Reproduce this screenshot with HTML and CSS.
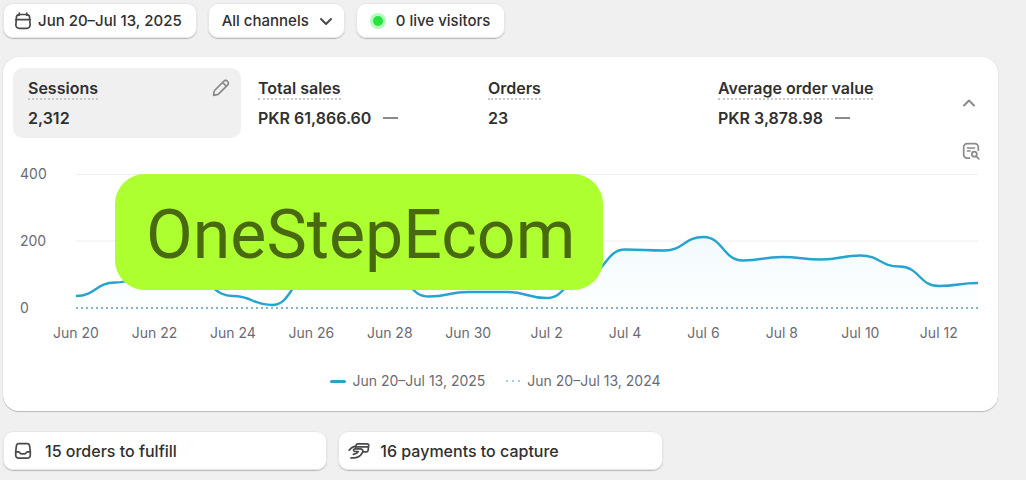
FILE: index.html
```html
<!DOCTYPE html>
<html lang="en">
<head>
<meta charset="utf-8">
<meta name="viewport" content="width=device-width, initial-scale=1">
<title>Store overview</title>
<link rel="stylesheet" href="styles.css">
</head>
<body>
<main class="page">
  <div class="filters">
    <button class="pill" type="button">
      <svg class="icon" viewBox="0 0 18 18" aria-hidden="true"><path d="M5.2 1.2v2M12.8 1.2v2M1.7 7.6h14.6M5 2.5h8a3 3 0 0 1 2.6 3.2l.5 7a3.2 3.2 0 0 1-3.2 3.6H5.1a3.2 3.2 0 0 1-3.2-3.6l.5-7A3 3 0 0 1 5 2.500z"/></svg>
      Jun 20–Jul 13, 2025
    </button>
    <button class="pill pill-menu" type="button">
      All channels
      <svg class="chevron" viewBox="0 0 14 14" aria-hidden="true"><path d="M2 5l5 5 5-5"/></svg>
    </button>
    <button class="pill pill-live" type="button"><span class="live-dot"></span>0 live visitors</button>
  </div>

  <section class="card">
    <div class="summary">
      <div class="metrics">
        <div class="metric metric-active">
          <span class="metric-name">Sessions</span>
          <span class="metric-value">2,312</span>
          <button class="edit" type="button" aria-label="Edit metric">
            <svg class="icon icon-muted" viewBox="0 0 18 18" aria-hidden="true"><path d="M1.600 16.400l.5-3.700a3 3 0 0 1 .9-1.700l8.700-8.700a2.500 2.500 0 0 1 3.800 0 2.500 2.500 0 0 1 0 3.800L7 14.700a3 3 0 0 1-1.700.9zM10.600 3.500l3.700 3.700"/></svg>
          </button>
        </div>
        <div class="metric">
          <span class="metric-name">Total sales</span>
          <span class="metric-value">PKR 61,866.60<i class="no-change"></i></span>
        </div>
        <div class="metric">
          <span class="metric-name">Orders</span>
          <span class="metric-value">23</span>
        </div>
        <div class="metric">
          <span class="metric-name">Average order value</span>
          <span class="metric-value">PKR 3,878.98<i class="no-change"></i></span>
        </div>
      </div>
      <button class="collapse" type="button" aria-label="Collapse">
        <svg class="chevron icon-muted" viewBox="0 0 14 14" aria-hidden="true"><path d="M2 9.500l5-5 5 5"/></svg>
      </button>
    </div>

    <div class="toolbar">
      <button class="explore" type="button" aria-label="Explore report">
        <svg class="icon icon-muted" viewBox="0 0 18 18" aria-hidden="true"><path d="M7.500 16.200H5.200a3.500 3.500 0 0 1-3.500-3.500V5.200a3.500 3.500 0 0 1 3.500-3.500h7.600a3.500 3.500 0 0 1 3.500 3.500v3M5.500 6h7M5.500 9h2.500M14.300 14.300l2.500 2.500"/><circle cx="12.300" cy="12.200" r="2.500"/></svg>
      </button>
    </div>

    <div class="chart">
      <div class="y-axis"><span>400</span><span>200</span><span>0</span></div>
      <svg class="plot" viewBox="0 0 920 134" preserveAspectRatio="none" role="img" aria-label="Sessions by day">
        <defs><linearGradient id="fill" x1="0" y1="0" x2="0" y2="1"><stop offset="0" stop-color="#f2fafd"/><stop offset="1" stop-color="#fdffff"/></linearGradient></defs>
        <path class="grid-line" d="M0 .5H920M0 67H920"/>
        <path fill="url(#fill)" d="M0 122C20 122 20 108.500 40 108.500S60 100 80 100 100 106 120 106 140 122 160 122 180 131 200 131 220 101 240 101 260 90 280 90 300 101 320 101 340 122.500 360 122.500 380 118 400 118 420 118 440 118 460 124 480 124 500 101 520 101 540 75.500 560 75.500 580 76.500 600 76.500 620 63 640 63 660 86.500 680 86.500 700 83 720 83 740 85.500 760 85.500 780 81.500 800 81.500 820 92.500 840 92.500 860 112 880 112 900 109 920 109V134H0z"/>
        <path class="previous" d="M0 134H920"/>
        <path class="current" d="M0 122C20 122 20 108.500 40 108.500S60 100 80 100 100 106 120 106 140 122 160 122 180 131 200 131 220 101 240 101 260 90 280 90 300 101 320 101 340 122.500 360 122.500 380 118 400 118 420 118 440 118 460 124 480 124 500 101 520 101 540 75.500 560 75.500 580 76.500 600 76.500 620 63 640 63 660 86.500 680 86.500 700 83 720 83 740 85.500 760 85.500 780 81.500 800 81.500 820 92.500 840 92.500 860 112 880 112 900 109 920 109"/>
      </svg>
      <div class="x-axis">
        <div class="x-labels"><span>Jun 20</span><span>Jun 22</span><span>Jun 24</span><span>Jun 26</span><span>Jun 28</span><span>Jun 30</span><span>Jul 2</span><span>Jul 4</span><span>Jul 6</span><span>Jul 8</span><span>Jul 10</span><span>Jul 12</span></div>
      </div>
      <div class="brand">OneStepEcom</div>
    </div>

    <div class="legend">
      <span class="legend-item"><i class="swatch"></i>Jun 20–Jul 13, 2025</span>
      <span class="legend-item"><svg class="swatch-dotted" viewBox="0 0 16 2" aria-hidden="true"><path d="M1 0h2v2H1zM7 0h2v2H7zM13 0h2v2h-2z"/></svg>Jun 20–Jul 13, 2024</span>
    </div>
  </section>

  <div class="tasks">
    <button class="pill task" type="button">
      <svg class="icon" viewBox="0 0 18 18" aria-hidden="true"><path d="M5 1.700h8a2.600 2.600 0 0 1 2.600 2.200l.7 5.600v3.700a3 3 0 0 1-3 3H4.700a3 3 0 0 1-3-3V9.500l.7-5.600A2.600 2.600 0 0 1 5 1.700zM1.700 9.800h2.900c.8 0 1.100.5 1.500 1.200.4.600.8.900 1.400.9h3c.6 0 1-.3 1.400-.9.400-.7.700-1.200 1.500-1.200h2.900"/></svg>
      15 orders to fulfill
    </button>
    <button class="pill task task-capture" type="button">
      <svg class="icon icon-wide" viewBox="0 0 22 18" aria-hidden="true"><path d="M1.200 8.200C2.600 6 4.300 4.700 6.900 4.300M7.600 6.600l.4-3a1.900 1.900 0 0 1 1.900-1.700h9.300a1.500 1.500 0 0 1 1.500 1.700l-.6 4.700a1.900 1.900 0 0 1-1.900 1.600h-3.400M8 4.900h12.500M12 6.900H7.200c-2 .1-2.300 2-.6 2.400l3.700.2c-1 1.700-2.700 2.600-5 2.900M3 15.900h3.200c3.700-.2 7.100-2.600 8.500-6 .7-1.800-.5-2.900-2.700-3"/></svg>
      16 payments to capture
    </button>
  </div>
</main>
</body>
</html>
```
FILE: styles.css
```css
* { box-sizing: border-box; }

body {
  margin: 0;
  background: #f0f0f0;
  color: #303030;
  font: 500 15px/20px Inter, "Liberation Sans", sans-serif;
}

button {
  margin: 0;
  padding: 0;
  border: 0;
  background: none;
  color: inherit;
  font: inherit;
}

.page { padding: 3px 28px 8px 3px; }

.filters { display: flex; gap: 11px; }

.pill {
  display: flex;
  align-items: center;
  gap: 6px;
  height: 35px;
  padding: 0 15px 0 11px;
  border-radius: 10px;
  background: #fff;
  box-shadow: 0 1px 1px #b8b8b8, inset 0 0 0 1px #e6e6e6;
}

.pill-menu { gap: 10px; padding: 0 12px 0 14px; }
.pill-live { gap: 13px; padding-left: 17px; }

.icon, .chevron {
  flex: none;
  width: 18px;
  height: 18px;
  fill: none;
  stroke: #4a4a4a;
  stroke-width: 1.7;
  stroke-linecap: round;
  stroke-linejoin: round;
}

.chevron { width: 14px; height: 14px; stroke-width: 2; }
.icon-wide { width: 22px; }
.icon-muted { stroke: #8a8a8a; }

.live-dot {
  width: 10px;
  height: 10px;
  border-radius: 50%;
  background: #27e33c;
  box-shadow: 0 0 0 3px #b5fac0;
}

.card {
  margin-top: 19px;
  padding: 11px 10px 22px;
  border-radius: 16px;
  background: #fff;
  box-shadow: 0 1px 1px #b8b8b8, 0 0 1px #cfcfcf;
}

.summary { display: flex; }

.metrics {
  display: grid;
  flex: 1;
  grid-template-columns: repeat(4, 1fr);
  gap: 2px;
}

.metric {
  position: relative;
  display: flex;
  flex-direction: column;
  align-items: flex-start;
  gap: 8px;
  height: 70px;
  padding: 10px 15px;
  border-radius: 10px;
  font-size: 16px;
  font-weight: 600;
}

.metric-active { background: #f0f0f0; }

.metric-name { border-bottom: 2px dotted #c8c8c8; }
.metric-value { display: flex; align-items: center; gap: 12px; }

.no-change { width: 15px; height: 2px; background: #8a8a8a; }

.edit {
  position: absolute;
  top: 11px;
  right: 11px;
  height: 18px;
}

.collapse {
  display: flex;
  align-items: center;
  justify-content: center;
  width: 57px;
  padding-left: 19px;
}

.toolbar {
  display: flex;
  justify-content: flex-end;
  padding: 4px 8px 0;
}

.explore { height: 18px; }

.chart {
  position: relative;
  display: grid;
  grid-template-columns: 56px 1fr;
  padding: 6px 10px 0 7px;
  color: #6b6b73;
  font-size: 14px;
  font-weight: 400;
  line-height: 16px;
}

.y-axis {
  display: flex;
  flex-direction: column;
  justify-content: space-between;
}

.plot {
  width: 100%;
  height: 134px;
  margin: 8px 0;
  overflow: visible;
}

.plot path { vector-effect: non-scaling-stroke; }
.grid-line { stroke: #ededed; }
.current { fill: none; stroke: #26a4cf; stroke-width: 2.4; }
.previous { stroke: #84b6cb; stroke-width: 2; stroke-dasharray: 2 3; }

.x-axis { grid-column: 2; padding-top: 9px; }

/* Each label spans two of the 23 day intervals, centred on its day. */
.x-labels {
  display: grid;
  grid-template-columns: repeat(12, 1fr);
  margin-left: calc(-100% / 23);
  text-align: center;
  white-space: nowrap;
}

.brand {
  position: absolute;
  top: 14px;
  left: 102px;
  padding: 21px 28px 15px 31px;
  border-radius: 30px;
  background: #adff2f;
  color: #48690f;
  font: 400 68px/80px Roboto, sans-serif;
}

.legend {
  display: flex;
  justify-content: center;
  gap: 20px;
  padding: 32px 10px 0 0;
  color: #6b6b73;
  font-size: 14px;
  font-weight: 400;
  line-height: 16px;
}

.legend-item { display: flex; align-items: center; gap: 6px; }

.swatch { width: 16px; border-top: 3px solid #26a4cf; border-radius: 2px; }
.swatch-dotted { width: 16px; height: 2px; fill: #a3cddd; }

.tasks {
  display: grid;
  grid-template-columns: repeat(3, 1fr);
  gap: 11px;
  margin-top: 20px;
}

.task { gap: 13px; height: 39px; font-size: 16px; }
.task-capture { gap: 10px; padding-left: 10px; }
```
